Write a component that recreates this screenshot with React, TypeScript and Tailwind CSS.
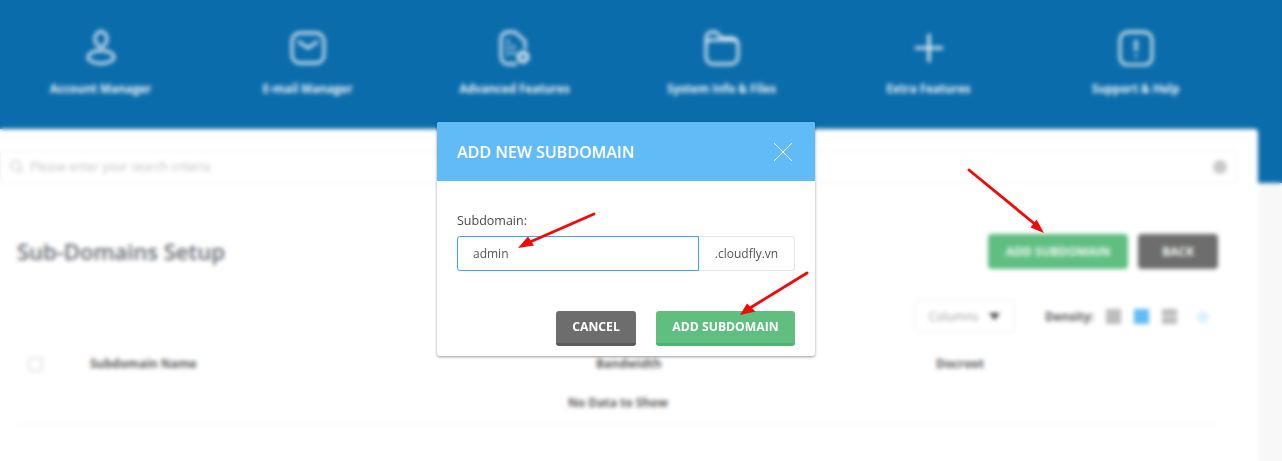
import React from 'react';
import { Search } from 'lucide-react';

const font = 'font-["Open_Sans",sans-serif]';

const AccountIcon = () => (
  <svg width="34" height="36" viewBox="0 0 34 36" fill="none" stroke="currentColor" strokeWidth="2.8">
    <ellipse cx="17" cy="9" rx="6" ry="7.5" />
    <ellipse cx="17" cy="27" rx="13" ry="6.5" />
  </svg>
);

const MailIcon = () => (
  <svg width="36" height="36" viewBox="0 0 36 36" fill="none" stroke="currentColor" strokeWidth="2.8">
    <rect x="2" y="3" width="32" height="30" rx="8" />
    <path d="M9 12l9 6 9-6" strokeLinecap="round" strokeLinejoin="round" />
  </svg>
);

const DocGearIcon = () => (
  <svg width="36" height="36" viewBox="0 0 36 36" fill="none" stroke="currentColor" strokeWidth="2.8">
    <path d="M20 34h-9a7 7 0 0 1-7-7V9a7 7 0 0 1 7-7h7l10 9v8" strokeLinejoin="round" />
    <path d="M11 11v1M11 17v1M11 23v1M16 17h1M16 23h1" strokeLinecap="round" />
    <circle cx="26" cy="27" r="6.5" fill="currentColor" stroke="none" />
    <circle cx="26" cy="27" r="2.5" fill="#0b6cab" stroke="none" />
  </svg>
);

const FolderIcon = () => (
  <svg width="36" height="36" viewBox="0 0 36 36" fill="none" stroke="currentColor" strokeWidth="2.8">
    <path d="M2 12V8a6 6 0 0 1 6-6h4l6 6h10a6 6 0 0 1 6 6v13a7 7 0 0 1-7 7H9a7 7 0 0 1-7-7V15a5 5 0 0 1 5-5h22a5 5 0 0 1 5 5" strokeLinejoin="round" />
  </svg>
);

const PlusIcon = () => (
  <svg width="36" height="36" viewBox="0 0 36 36" fill="none" stroke="currentColor" strokeWidth="3.2">
    <path d="M18 4v28M4 18h28" />
  </svg>
);

const AlertIcon = () => (
  <svg width="36" height="36" viewBox="0 0 36 36" fill="none" stroke="currentColor" strokeWidth="2.8">
    <rect x="2" y="2" width="32" height="33" rx="8" />
    <path d="M18 10v11M18 25v2" strokeWidth="3" />
  </svg>
);

const navItems = [
  { label: 'Account Manager', icon: <AccountIcon /> },
  { label: 'E-mail Manager', icon: <MailIcon /> },
  { label: 'Advanced Features', icon: <DocGearIcon /> },
  { label: 'System Info & Files', icon: <FolderIcon /> },
  { label: 'Extra Features', icon: <PlusIcon /> },
  { label: 'Support & Help', icon: <AlertIcon /> },
];

const DensityIcon = ({ rows, active }: { rows: number; active?: boolean }) => (
  <div className={`flex h-[15px] w-[15px] flex-col gap-px ${active ? 'bg-[#60bbf7]' : ''}`}>
    {Array.from({ length: rows }).map((_, i) => (
      <div key={i} className={`flex-1 ${active ? 'bg-[#60bbf7]' : 'bg-[#bdbdbd]'}`} />
    ))}
  </div>
);

// Blurred page behind the dialog
const Page = () => (
  <div className="flex h-full flex-col">
    <div className="h-[183px] shrink-0 bg-[#0b6cab]">
      <div className="-ml-[3px] flex pt-[30px] text-[#dce9f3]">
        {navItems.map(item => (
          <div key={item.label} className="flex w-[207px] flex-col items-center">
            {item.icon}
            <span className="mt-[15px] text-[11.6px] leading-4 font-bold whitespace-nowrap text-[#e3eef6]">{item.label}</span>
          </div>
        ))}
      </div>
    </div>

    <div className="flex flex-1 bg-[#f8f8f8]">
      <div className="-mt-[54px] h-[calc(100%+54px)] w-[1258px] rounded-tr bg-white pt-[21px] pr-[21px]">
        <div className="flex h-[33px] items-center rounded border border-[#f1f1f1] pr-[9px] pl-2 text-[#c4c4c4]">
          <Search size={15} />
          <span className="ml-1.5 flex-1 text-xs">Please enter your search criteria</span>
          <div className="h-[14px] w-[14px] rounded-full bg-[#c9c9c9]" />
        </div>

        <div className="pt-[51px] pr-[19px] pl-[18px]">
          <div className="flex items-center justify-between">
            <h1 className="-ml-px text-[22px] font-semibold text-[#666a70]">Sub-Domains Setup</h1>
            <div className="flex gap-[10px] text-xs font-bold text-[#eef7f1]">
              <div className="flex h-[35px] w-[140px] items-center justify-center rounded bg-[#5fbe80]">ADD SUBDOMAIN</div>
              <div className="flex h-[35px] w-[80px] items-center justify-center rounded bg-[#6d6d6d]">BACK</div>
            </div>
          </div>

          <div className="mt-[31px] flex h-[33px] items-center justify-end">
            <div className="flex h-[33px] w-[101px] items-center justify-center gap-[11px] rounded border border-[#efefef] text-xs text-[#a5a5a5]">
              Columns
              <svg width="11" height="7" viewBox="0 0 11 7" className="text-[#444]">
                <path d="M0 0h11L5.5 7z" fill="currentColor" />
              </svg>
            </div>
            <span className="ml-[30px] text-xs font-bold text-[#5c5c5c]">Density:</span>
            <div className="mr-[9px] ml-3 flex items-center gap-[13px]">
              <DensityIcon rows={1} />
              <DensityIcon rows={1} active />
              <DensityIcon rows={2} />
              <div className="ml-[7px] h-[12px] w-[12px] rounded-full bg-[#dcf1fd]" />
            </div>
          </div>

          <div className="mt-[14px] grid h-[34px] grid-cols-[72px_506px_340px_1fr] items-center text-xs font-bold text-[#5c5c5c]">
            <div className="ml-[10px] h-[15px] w-[15px] rounded-sm border-2 border-[#e4e4e4]" />
            <span>Subdomain Name</span>
            <span>Bandwidth</span>
            <span>Docroot</span>
          </div>
          <div className="flex h-[44px] items-center justify-center border-b border-[#f0f0f0] text-xs font-bold text-[#5c5c5c]">
            No Data to Show
          </div>
        </div>
      </div>
    </div>
  </div>
);

const Dialog = () => (
  <div className="absolute top-[122px] left-[437px] w-[378px] overflow-hidden rounded-[3px] bg-white shadow-[0_1px_3px_rgba(0,0,0,0.4)]">
    <div className="flex h-[59px] items-center justify-between bg-[#60bbf7] pr-[22px] pl-5">
      <h2 className="text-base font-semibold text-white">ADD NEW SUBDOMAIN</h2>
      <svg width="20" height="20" viewBox="0 0 20 20" stroke="white" strokeWidth="1" fill="none">
        <path d="M1 1l18 18M19 1L1 19" />
      </svg>
    </div>
    <div className="px-5 pt-[31px] pb-[10px]">
      <div className="text-[12.5px] leading-[18px] text-[#4a4a4a]">Subdomain:</div>
      <div className="mt-[6px] flex h-[35px] text-xs text-[#555]">
        <div className="flex w-[242px] items-center rounded-l-[3px] border border-[#39a7f0] pl-[15px]">admin</div>
        <div className="flex flex-1 items-center justify-center rounded-r-[3px] border border-l-0 border-[#e6e6e6]">.cloudfly.vn</div>
      </div>
      <div className="mt-10 flex justify-end gap-5 text-[12.2px] font-bold text-white">
        <div className="flex h-[35px] w-20 items-center justify-center rounded-[3px] border-b-[3px] border-[#5c5c5c] bg-[#6d6d6d]">CANCEL</div>
        <div className="flex h-[35px] w-[139px] items-center justify-center rounded-[3px] border-b-[3px] border-[#4cb473] bg-[#5fbe80]">ADD SUBDOMAIN</div>
      </div>
    </div>
  </div>
);

const Arrows = () => (
  <svg className="pointer-events-none absolute inset-0" width="1282" height="461" viewBox="0 0 1282 461" fill="none">
    <g stroke="#f00a0a" strokeWidth="2.9" strokeLinecap="round">
      <path d="M594 214L530 242" />
      <path d="M807 273L750 308" />
      <path d="M969 170L1036 225" />
    </g>
    <g fill="#f00a0a">
      <path d="M518 248L528 236.5L534 245.5Z" />
      <path d="M740 315L747 303.5L755.5 311.5Z" />
      <path d="M1044 233L1030.5 227.5L1036.5 219.5Z" />
    </g>
  </svg>
);

export default function App() {
  return (
    <div className={`relative h-[461px] w-[1282px] overflow-hidden ${font}`}>
      <Page />
      <div className="absolute inset-0 backdrop-blur-[2px]" />
      <Dialog />
      <Arrows />
    </div>
  );
}
